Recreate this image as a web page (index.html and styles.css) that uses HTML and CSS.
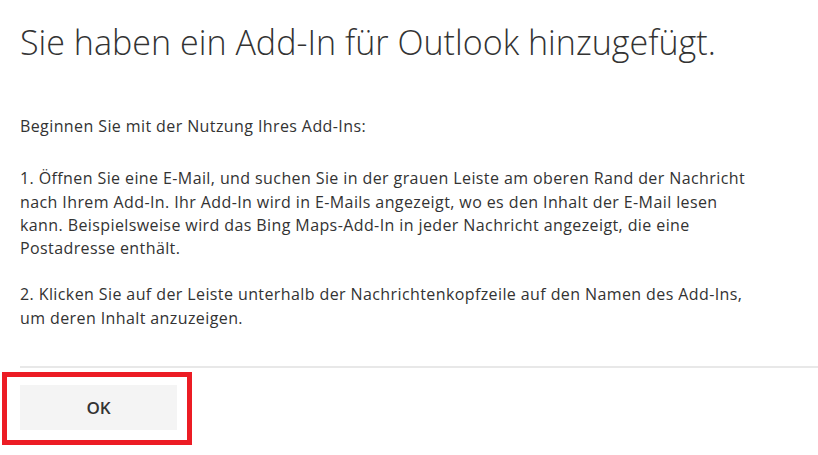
FILE: index.html
```html
<!DOCTYPE html>
<html lang="de">
<head>
<meta charset="utf-8">
<link rel="stylesheet" href="styles.css">
</head>
<body>
<div class="dialog">
  <h1 class="title">Sie haben ein Add-In für Outlook hinzugefügt.</h1>
  <div class="content">
    <p class="intro">Beginnen Sie mit der Nutzung Ihres Add-Ins:</p>
    <p class="step">1. Öffnen Sie eine E-Mail, und suchen Sie in der grauen Leiste am oberen Rand der Nachricht nach Ihrem Add-In. Ihr Add-In wird in E-Mails angezeigt, wo es den Inhalt der E-Mail lesen kann. Beispielsweise wird das Bing Maps-Add-In in jeder Nachricht angezeigt, die eine Postadresse enthält.</p>
    <p class="step">2. Klicken Sie auf der Leiste unterhalb der Nachrichtenkopfzeile auf den Namen des Add-Ins, um deren Inhalt anzuzeigen.</p>
  </div>
  <div class="footer">
    <button class="ok">OK</button>
    <div class="highlight"></div>
  </div>
</div>
</body>
</html>
```

FILE: styles.css
```css
html, body {
  margin: 0;
  padding: 0;
  background: #fff;
}
body {
  font-family: "Open Sans", "Noto Sans", sans-serif;
  color: #333;
  min-height: 455px;
}
.dialog {
  padding-left: 20px;
}
.title {
  margin: 0;
  padding-top: 19px;
  font-weight: 300;
  font-size: 34.1px;
  line-height: 46px;
  color: #333;
  white-space: nowrap;
}
.content {
  padding-top: 50px;
  width: 745px;
  font-size: 16px;
  letter-spacing: 0.4px;
  line-height: 23.3px;
}
.content p {
  margin: 0;
}
.intro {
  margin-bottom: 29px !important;
}
.step {
  margin-bottom: 23px !important;
}
.footer {
  position: relative;
  margin-top: 36px;
  border-top: 2px solid #e8e8e8;
  padding-top: 17px;
  padding-bottom: 24px;
}
.ok {
  display: block;
  width: 157px;
  height: 45px;
  border: 0;
  background: #f4f4f4;
  font-family: "Open Sans", "Noto Sans", sans-serif;
  font-weight: 600;
  font-size: 17px;
  color: #333;
  padding: 0;
}
.highlight {
  position: absolute;
  left: -18px;
  top: 4px;
  width: 180px;
  height: 63px;
  border: 5px solid #ec1c24;
}
```
